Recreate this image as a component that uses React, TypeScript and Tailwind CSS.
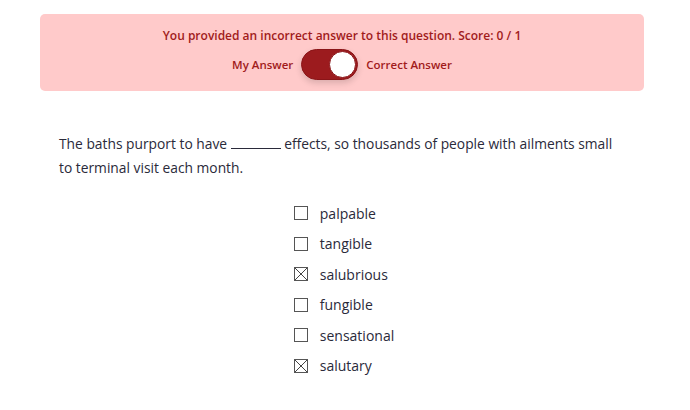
import React from "react";

const options = [
  { label: "palpable", checked: false },
  { label: "tangible", checked: false },
  { label: "salubrious", checked: true },
  { label: "fungible", checked: false },
  { label: "sensational", checked: false },
  { label: "salutary", checked: true },
];

function Box({ checked }: { checked: boolean }) {
  return (
    <svg width="14" height="14" viewBox="0 0 14 14" className="shrink-0">
      <rect x="0.5" y="0.5" width="13" height="13" fill="white" stroke="#555" strokeWidth="1" />
      {checked && (
        <path d="M1 1 L13 13 M13 1 L1 13" stroke="#444" strokeWidth="1" />
      )}
    </svg>
  );
}

export default function App() {
  return (
    <div className="w-[690px] h-[410px] bg-white" style={{ fontFamily: "'Open Sans', Lato, sans-serif" }}>
      <div className="pt-[14px] px-[40px]">
        <div className="w-[604px] h-[77px] bg-[#ffcaca] rounded-[5px] flex flex-col items-center pt-[14px]">
          <div className="text-[12px] font-semibold text-[#a11b1b] leading-[16px]">
            You provided an incorrect answer to this question. Score: 0 / 1
          </div>
          <div className="flex items-center mt-[5px] gap-[8px] text-[11.5px] font-semibold text-[#a11b1b]">
            <span>My Answer</span>
            <div className="w-[57px] h-[31px] rounded-full bg-[#9c1b1e] border border-[#8a1518] relative shadow-[0_3px_6px_rgba(0,0,0,0.15)]">
              <div className="absolute right-[1px] top-[1px] w-[27px] h-[27px] rounded-full bg-white border border-[#8a1518]" />
            </div>
            <span>Correct Answer</span>
          </div>
        </div>
      </div>
      <div className="px-[59px] mt-[41px] text-[13.8px] leading-[24px] text-[#2a2a3a] whitespace-nowrap">
        The baths purport to have <span className="inline-block w-[50px] border-b border-[#2a2a3a] h-[1px] align-baseline" /> effects, so thousands of people with ailments small
        <br />
        to terminal visit each month.
      </div>
      <div className="flex justify-center mt-[18px]">
        <div className="flex flex-col ml-[-2px]">
          {options.map((o) => (
            <div key={o.label} className="flex items-center h-[30.5px] gap-[12px] text-[14px] text-[#2a2a3a]">
              <Box checked={o.checked} />
              <span>{o.label}</span>
            </div>
          ))}
        </div>
      </div>
    </div>
  );
}
